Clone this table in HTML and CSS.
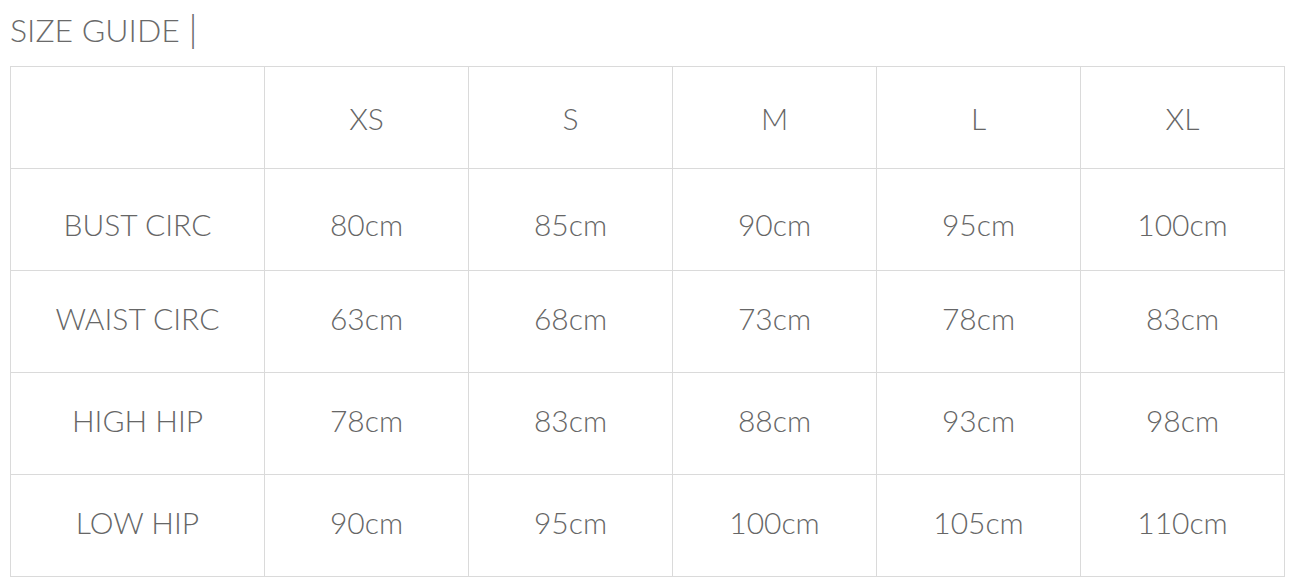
FILE: index.html
```html
<!DOCTYPE html>
<html>
<head>
<meta charset="utf-8">
<link rel="stylesheet" href="styles.css">
</head>
<body>
<div class="page">
  <h2 class="title">SIZE GUIDE <span class="bar">|</span></h2>
  <table class="guide">
    <colgroup><col class="c-label"><col><col><col><col><col></colgroup>
    <tr class="head"><td></td><td>XS</td><td>S</td><td>M</td><td>L</td><td>XL</td></tr>
    <tr class="bust"><td>BUST CIRC</td><td>80cm</td><td>85cm</td><td>90cm</td><td>95cm</td><td>100cm</td></tr>
    <tr class="row"><td>WAIST CIRC</td><td>63cm</td><td>68cm</td><td>73cm</td><td>78cm</td><td>83cm</td></tr>
    <tr class="row"><td>HIGH HIP</td><td>78cm</td><td>83cm</td><td>88cm</td><td>93cm</td><td>98cm</td></tr>
    <tr class="row"><td>LOW HIP</td><td>90cm</td><td>95cm</td><td>100cm</td><td>105cm</td><td>110cm</td></tr>
  </table>
</div>
</body>
</html>
```
FILE: styles.css
```css
html, body { margin: 0; padding: 0; background: #fff; }
.page {
  padding: 0 0 0 10px;
  font-family: "Lato", "Liberation Sans", sans-serif;
  font-weight: 300;
  color: #666;
}
.title {
  margin: 0;
  height: 66px;
  padding-top: 7px;
  box-sizing: border-box;
  font-size: 32px;
  font-weight: 300;
  line-height: 40px;
  color: #6a6a6a;
}
.bar { font-size: 38px; }
.guide {
  border-collapse: collapse;
  width: 1275px;
  table-layout: fixed;
}
.c-label { width: 254px; }
.guide td {
  border: 1px solid #dadada;
  height: 101px;
  padding: 0;
  text-align: center;
  vertical-align: middle;
  font-size: 30px;
  line-height: 1;
}
.guide .bust td { padding-top: 8px; height: 93px; }
.guide .row td { padding-bottom: 7px; height: 94px; }
```
